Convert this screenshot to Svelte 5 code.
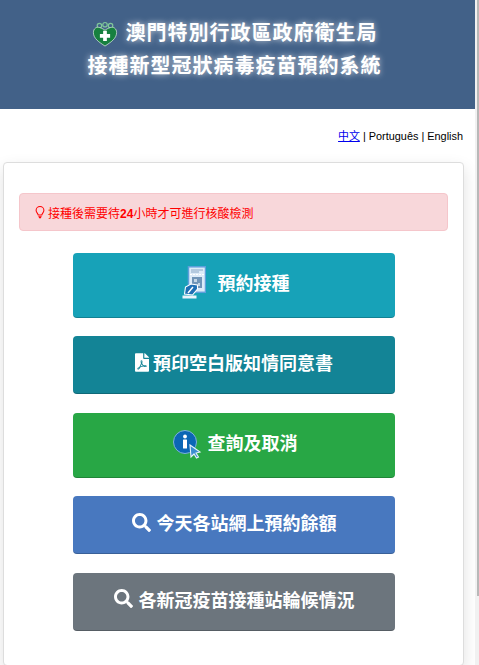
<script>
	const links = ['Português', 'English'];
</script>

<div class="page">
	<header class="banner">
		<div class="title-line">
			<svg class="logo" viewBox="0 0 28 28" width="26" height="26">
				<circle cx="8" cy="5" r="2.4" fill="none" stroke="#7fc79a" stroke-width="1.3" />
				<circle cx="14" cy="4" r="2.4" fill="none" stroke="#7fc79a" stroke-width="1.3" />
				<circle cx="20" cy="5" r="2.4" fill="none" stroke="#7fc79a" stroke-width="1.3" />
				<path d="M14 27 C8 23 1.500 19 1.500 12.500 C1.500 8 5 6 8 7 C11 8 13 9 14 10 C15 9 17 8 20 7 C23 6 26.500 8 26.500 12.500 C26.500 19 20 23 14 27 Z" fill="#17803f" stroke="#d5e8da" stroke-width="0.8" />
				<path d="M12 10.5h4v3.5h3.5v4H16v3.5h-4V18H8.500v-4H12z" fill="#fff" />
			</svg>
			<span>澳門特別行政區政府衛生局</span>
		</div>
		<div class="title-line">接種新型冠狀病毒疫苗預約系統</div>
	</header>

	<div class="langs">
		<a href="#zh">中文</a>{#each links as l}<span>&nbsp;| {l}</span>{/each}
	</div>

	<main class="card">
		<div class="alert">
			<svg viewBox="0 0 12 16" width="10" height="13">
				<path d="M3.800 11 C3.500 9 1.200 8 1.200 5.300 A4.800 4.600 0 0 1 10.800 5.300 C10.800 8 8.500 9 8.200 11 Z" fill="none" stroke="#ff0000" stroke-width="1.300" />
				<path d="M4 12.500h4v1.200H7.200v1.300H4.800v-1.300H4z" fill="#ff0000" />
			</svg>
			<span>接種後需要待<b>24</b>小時才可進行核酸檢測</span>
		</div>

		<div class="buttons">
			<a class="btn teal tall" href="#book">
				<svg class="doc-icon" viewBox="0 0 24 33" width="24" height="33">
					<rect x="6.500" y="0.800" width="17" height="25.500" fill="#dcebf8" stroke="#5f9fdc" stroke-width="1.500" />
					<path d="M9 4h12M9 6h8" stroke="#8aa8c6" stroke-width="1" />
					<path d="M8 8.500h15" stroke="#fff" stroke-width="1" stroke-dasharray="2 1" />
					<rect x="10" y="11" width="10" height="11" fill="#7095b8" />
					<path d="M12 13h3v3h-3zM16 17h2v3h-2z" fill="#c4d6e6" />
					<path d="M2.500 28 L3.500 21 L9 18 L15.500 19 L15.500 23 L10.500 29 Z" fill="#1f6fb5" stroke="#fff" stroke-width="1.100" />
					<path d="M6 27l5-6" stroke="#fff" stroke-width="1.400" />
					<rect x="0.500" y="29.500" width="14" height="3" fill="#eaf3fb" />
				</svg>
				<span class="gap-l">預約接種</span>
			</a>

			<a class="btn dark-teal" href="#pdf">
				<svg viewBox="0 0 384 512" width="14" height="19">
					<path fill="#fff" d="M181.900 256.100c-5-16-4.900-46.900-2-46.900 8.400 0 7.600 36.900 2 46.900zm-1.700 47.200c-7.700 20.200-17.300 43.300-28.400 62.700 18.300-7 39-17.200 62.900-21.900-12.700-9.600-24.900-23.400-34.500-40.800zM86.100 428.100c0 .8 13.200-5.400 34.900-40.200-6.700 6.300-29.100 24.500-34.900 40.200zM248 160h136v328c0 13.300-10.700 24-24 24H24c-13.300 0-24-10.700-24-24V24C0 10.700 10.700 0 24 0h200v136c0 13.200 10.800 24 24 24zm-8 171.800c-20-12.200-33.300-29-42.700-53.800 4.500-18.500 11.600-46.600 6.200-64.200-4.700-29.400-42.400-26.500-47.800-6.800-5 18.300-.4 44.100 8.100 77-11.600 27.600-28.700 64.600-40.800 85.800-.1 0-.1.100-.2.100-27.100 13.900-73.600 44.500-54.500 68 5.600 6.900 16 10 21.500 10 17.900 0 35.700-18 61.100-61.800 25.800-8.500 54.100-19.100 79-23.200 21.700 11.800 47.100 19.500 64 19.500 29.200 0 31.200-32 19.700-43.400-13.900-13.600-54.300-9.700-73.600-7.200zM377 105L279 7c-4.500-4.500-10.600-7-17-7h-6v128h128v-6.100c0-6.300-2.500-12.400-7-16.900zm-74.100 255.300c4.100-2.700-2.500-11.900-42.800-9 37.100 15.800 42.800 9 42.800 9z" />
				</svg>
				<span class="gap-s">預印空白版知情同意書</span>
			</a>

			<a class="btn green tall" href="#query">
				<svg class="info-icon" viewBox="0 0 30 30" width="30" height="30">
					<circle cx="13" cy="13" r="11.500" fill="#0b66b5" stroke="#7fb3d9" stroke-width="1" />
					<circle cx="13" cy="7.500" r="1.900" fill="#fff" />
					<rect x="11" y="10.500" width="4" height="9" rx="0.500" fill="#fff" />
					<path d="M18 16l10 7-4 1 2.500 4-2 1-2.500-4-3 3z" fill="#3b8ed0" stroke="#e8f2fa" stroke-width="1.100" />
				</svg>
				<span class="gap-m">查詢及取消</span>
			</a>

			<a class="btn blue" href="#quota">
				<svg viewBox="0 0 512 512" width="19" height="19">
					<path fill="#fff" d="M505 442.700L405.300 343c-4.500-4.500-10.600-7-17-7H372c27.600-35.300 44-79.700 44-128C416 93.100 322.900 0 208 0S0 93.100 0 208s93.100 208 208 208c48.300 0 92.700-16.400 128-44v16.300c0 6.400 2.500 12.500 7 17l99.700 99.700c9.400 9.400 24.600 9.400 33.900 0l28.300-28.300c9.400-9.400 9.400-24.600.1-34zM208 336c-70.700 0-128-57.200-128-128 0-70.700 57.200-128 128-128 70.700 0 128 57.200 128 128 0 70.700-57.200 128-128 128z" />
				</svg>
				<span class="gap-m">今天各站網上預約餘額</span>
			</a>

			<a class="btn grey" href="#queue">
				<svg viewBox="0 0 512 512" width="19" height="19">
					<path fill="#fff" d="M505 442.700L405.300 343c-4.500-4.500-10.600-7-17-7H372c27.600-35.300 44-79.700 44-128C416 93.100 322.900 0 208 0S0 93.100 0 208s93.100 208 208 208c48.300 0 92.700-16.400 128-44v16.300c0 6.400 2.500 12.500 7 17l99.700 99.700c9.400 9.400 24.600 9.400 33.900 0l28.300-28.300c9.400-9.400 9.400-24.600.1-34zM208 336c-70.700 0-128-57.200-128-128 0-70.700 57.200-128 128-128 70.700 0 128 57.200 128 128 0 70.700-57.200 128-128 128z" />
				</svg>
				<span class="gap-m">各新冠疫苗接種站輪候情況</span>
			</a>
		</div>
	</main>
</div>

<div class="scrollbar"><div class="thumb"></div></div>

<style>
	:global(body) {
		margin: 0;
		background: #fff;
		font-family: "Liberation Sans", "Noto Sans CJK TC", sans-serif;
	}

	.page {
		width: 475px;
		padding-bottom: 40px;
		overflow: hidden;
	}

	.scrollbar {
		position: fixed;
		top: 0;
		right: 0;
		bottom: 0;
		width: 4px;
		background: #f1f1f1;
	}

	.thumb {
		height: 596px;
		margin-left: 2px;
		background: #b8b8b8;
	}

	.banner {
		height: 109px;
		box-sizing: border-box;
		padding-top: 17px;
		background: #426188;
		color: #fff;
		font-size: 20px;
		font-weight: bold;
		line-height: 33px;
		letter-spacing: 1px;
		text-align: center;
		text-shadow: 0 0 6px rgba(255, 255, 255, 0.75);
	}

	.title-line {
		display: flex;
		justify-content: center;
		align-items: center;
		gap: 8px;
		margin-left: -6px;
	}

	.logo {
		flex: none;
	}

	.langs {
		height: 53px;
		box-sizing: border-box;
		padding: 20px 12px 0 0;
		text-align: right;
		font-size: 10.9px;
		line-height: 14px;
		color: #000;
	}

	.langs a {
		color: #0000ee;
	}

	.card {
		margin: 0 11px 0 3px;
		padding: 30px 15px 34px;
		background: #fff;
		border: 1px solid #ddd;
		border-radius: 4px;
		box-shadow: 0 6px 16px rgba(0, 0, 0, 0.12);
	}

	.alert {
		display: flex;
		align-items: center;
		gap: 3px;
		height: 38px;
		box-sizing: border-box;
		padding-left: 15px;
		background: #f8d7da;
		border: 1px solid #f5c6cb;
		border-radius: 4px;
		color: #ff0000;
		font-size: 12px;
	}

	.buttons {
		display: flex;
		flex-direction: column;
		gap: 18.5px;
		margin: 21.8px 53px 0 54px;
	}

	.btn {
		display: flex;
		justify-content: center;
		align-items: center;
		height: 58px;
		padding-bottom: 5px;
		border-radius: 4px;
		border-bottom: 1px solid rgba(0, 0, 0, 0.2);
		box-sizing: border-box;
		color: #fff;
		font-size: 18px;
		font-weight: bold;
		text-decoration: none;
	}

	.tall {
		height: 65px;
	}

	.teal {
		background: #17a2b8;
	}

	.dark-teal {
		background: #138496;
	}

	.green {
		background: #28a745;
	}

	.blue {
		background: #4878bf;
	}

	.grey {
		background: #6c757d;
	}

	.doc-icon {
		margin-left: 3px;
	}

	.info-icon {
		margin: 4px 0 0 1px;
	}

	.gap-l {
		margin-left: 12px;
	}

	.gap-s {
		margin-left: 4px;
	}

	.gap-m {
		margin-left: 6px;
	}
</style>
